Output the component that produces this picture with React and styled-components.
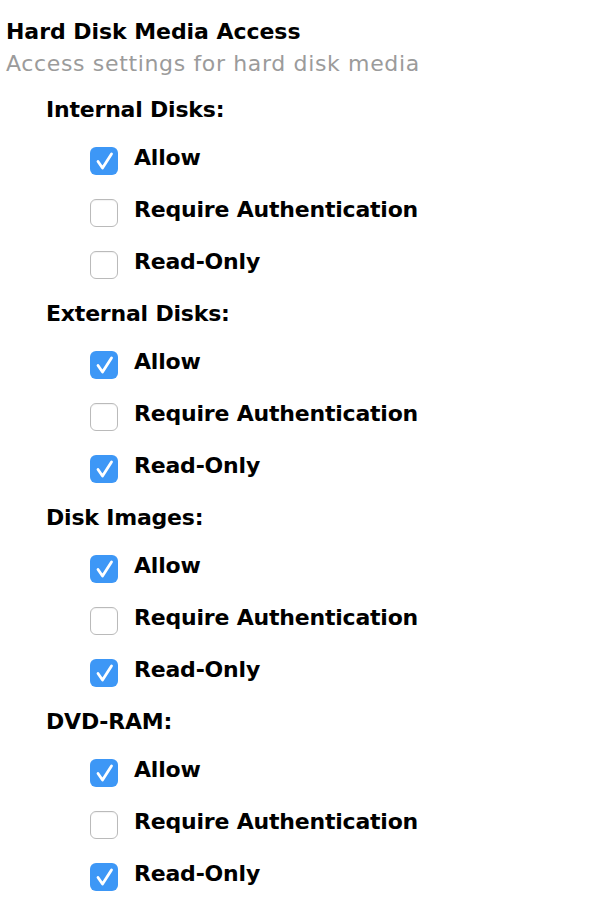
import React from 'react'
import styled, { createGlobalStyle } from "styled-components";

const GlobalStyle = createGlobalStyle`
  body {
    margin: 0;
    background: #ffffff;
    font-family: "DejaVu Sans", "Liberation Sans", sans-serif;
  }
`;

const groups = [
  { name: 'Internal Disks:', allow: true, auth: false, readOnly: false },
  { name: 'External Disks:', allow: true, auth: false, readOnly: true },
  { name: 'Disk Images:', allow: true, auth: false, readOnly: true },
  { name: 'DVD-RAM:', allow: true, auth: false, readOnly: true },
];

function Checkbox({ checked }) {
  return (
    <Box checked={checked}>
      {checked &&
        <svg width="28" height="28" viewBox="0 0 28 28">
          <path d="M8 14.5 L12.5 21 L21.5 7" fill="none" stroke="#fff" strokeWidth="2.8" strokeLinecap="round" strokeLinejoin="round" />
        </svg>
      }
    </Box>
  )
}

function Option({ label, checked }) {
  return (
    <Row>
      <Checkbox checked={checked} />
      <Label>{label}</Label>
    </Row>
  )
}

function App() {
  return (
    <Page>
      <GlobalStyle />
      <Title>Hard Disk Media Access</Title>
      <Subtitle>Access settings for hard disk media</Subtitle>
      <Groups>
        {groups.map(g => (
          <Group key={g.name}>
            <GroupName>{g.name}</GroupName>
            <Option label="Allow" checked={g.allow} />
            <Option label="Require Authentication" checked={g.auth} />
            <Option label="Read-Only" checked={g.readOnly} />
          </Group>
        ))}
      </Groups>
    </Page>
  )
}

const Page = styled.div`
    padding: 16px 0 0 6px;
    color: #000;
`;

const Title = styled.div`
    font-size: 22px;
    font-weight: bold;
    line-height: 32px;
    letter-spacing: -0.05px;
`;

const Subtitle = styled.div`
    font-size: 22px;
    line-height: 32px;
    letter-spacing: 0.65px;
    color: #9b9b9b;
`;

const Groups = styled.div`
    padding-top: 4px;
    padding-left: 40px;
`;

const Group = styled.div`
    display: flex;
    flex-direction: column;
`;

const GroupName = styled.div`
    font-size: 22px;
    font-weight: bold;
    line-height: 52px;
    margin-bottom: -4px;
    letter-spacing: -0.2px;
`;

const Row = styled.div`
    display: flex;
    align-items: center;
    height: 52px;
    padding-left: 44px;
    gap: 16px;
`;

const Box = styled.div`
    width: 28px;
    height: 28px;
    flex: none;
    box-sizing: border-box;
    margin-top: 6px;
    border-radius: 6px;
    display: flex;
    align-items: center;
    justify-content: center;
    background: ${p => p.checked ? '#3d97f6' : '#ffffff'};
    border: ${p => p.checked ? 'none' : '1px solid #bababa'};
    box-shadow: ${p => p.checked ? 'none' : 'inset 0 1px 1px rgba(0,0,0,0.05)'};
`;

const Label = styled.span`
    font-size: 22px;
    font-weight: bold;
    line-height: 28px;
    letter-spacing: -0.2px;
`;

export default App
